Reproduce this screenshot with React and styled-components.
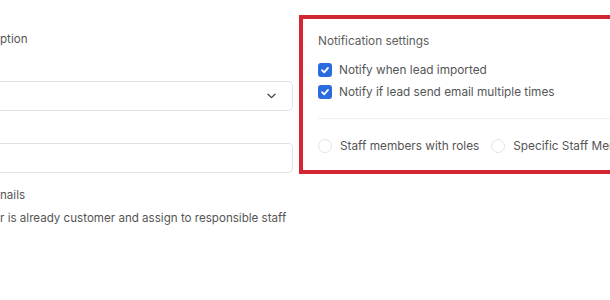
import React from "react";
import styled, { createGlobalStyle } from "styled-components";

const Global = createGlobalStyle`
  html, body { margin: 0; padding: 0; background: #fff; }
  body { font-family: Inter, "Noto Sans", sans-serif; color: #555; overflow: hidden; }
`;

const Page = styled.div`
  width: 610px;
  height: 300px;
  display: flex;
  align-items: flex-start;
  gap: 6px;
  overflow: hidden;
`;

const LeftCol = styled.div`
  width: 293px;
  flex: none;
  display: flex;
  flex-direction: column;
  padding-top: 32px;
`;

const Text = styled.div`
  font-size: 11.6px;
  line-height: 14px;
  color: #555;
  white-space: nowrap;
  margin-top: ${(p) => p.$mt || 0}px;
`;

const Field = styled.div`
  height: 30px;
  box-sizing: border-box;
  border: 1px solid #e1e1e1;
  border-left: none;
  border-radius: 0 5px 5px 0;
  display: flex;
  align-items: center;
  justify-content: flex-end;
  padding-right: 16px;
  margin-top: ${(p) => p.$mt || 0}px;
`;

const Panel = styled.div`
  flex: none;
  width: 340px;
  margin-top: 15px;
  border: 4px solid #d42533;
  border-right: none;
  padding: 15px 0 14px 15px;
  box-sizing: border-box;
`;

const Heading = styled.div`
  font-size: 11.8px;
  line-height: 14px;
  color: #5e5e5e;
`;

const CheckList = styled.div`
  margin-top: 12px;
  display: flex;
  flex-direction: column;
  gap: 2px;
`;

const Row = styled.label`
  display: flex;
  align-items: center;
  height: 20px;
  gap: 7px;
  font-size: 11.8px;
  color: #555;
  white-space: nowrap;
`;

const Box = styled.span`
  width: 14px;
  height: 14px;
  border-radius: 3px;
  background: #2b6be0;
  display: inline-flex;
  align-items: center;
  justify-content: center;
  flex: none;
`;

const Divider = styled.div`
  margin-top: 16px;
  height: 1px;
  background: #efefef;
`;

const RadioRow = styled.div`
  margin-top: 17px;
  display: flex;
  align-items: center;
  gap: 12px;
`;

const Radio = styled.span`
  width: 14px;
  height: 14px;
  border-radius: 50%;
  border: 1px solid #e4e4e4;
  box-sizing: border-box;
  flex: none;
`;

const RadioOption = styled.label`
  display: flex;
  align-items: center;
  gap: 8px;
  height: 20px;
  font-size: 11.8px;
  color: #555;
  white-space: nowrap;
`;

const Check = () => (
  <svg width="10" height="10" viewBox="0 0 10 10">
    <path d="M2 5.2 L4.2 7.3 L8 2.9" fill="none" stroke="#fff" strokeWidth="1.8" strokeLinecap="round" strokeLinejoin="round" />
  </svg>
);

const Chevron = () => (
  <svg width="9" height="6" viewBox="0 0 9 6">
    <path d="M1 1.2 L4.5 4.6 L8 1.2" fill="none" stroke="#444" strokeWidth="1.3" strokeLinecap="round" strokeLinejoin="round" />
  </svg>
);

export default function App() {
  return (
    <>
      <Global />
      <Page>
        <LeftCol>
          <Text>ption</Text>
          <Field $mt={35}>
            <Chevron />
          </Field>
          <Field $mt={32} />
          <Text $mt={15}>nails</Text>
          <Text $mt={9}>r is already customer and assign to responsible staff</Text>
        </LeftCol>
        <Panel>
          <Heading>Notification settings</Heading>
          <CheckList>
            <Row>
              <Box><Check /></Box>
              Notify when lead imported
            </Row>
            <Row>
              <Box><Check /></Box>
              Notify if lead send email multiple times
            </Row>
          </CheckList>
          <Divider />
          <RadioRow>
            <RadioOption>
              <Radio />
              Staff members with roles
            </RadioOption>
            <RadioOption>
              <Radio />
              Specific Staff Members
            </RadioOption>
          </RadioRow>
        </Panel>
      </Page>
    </>
  );
}
